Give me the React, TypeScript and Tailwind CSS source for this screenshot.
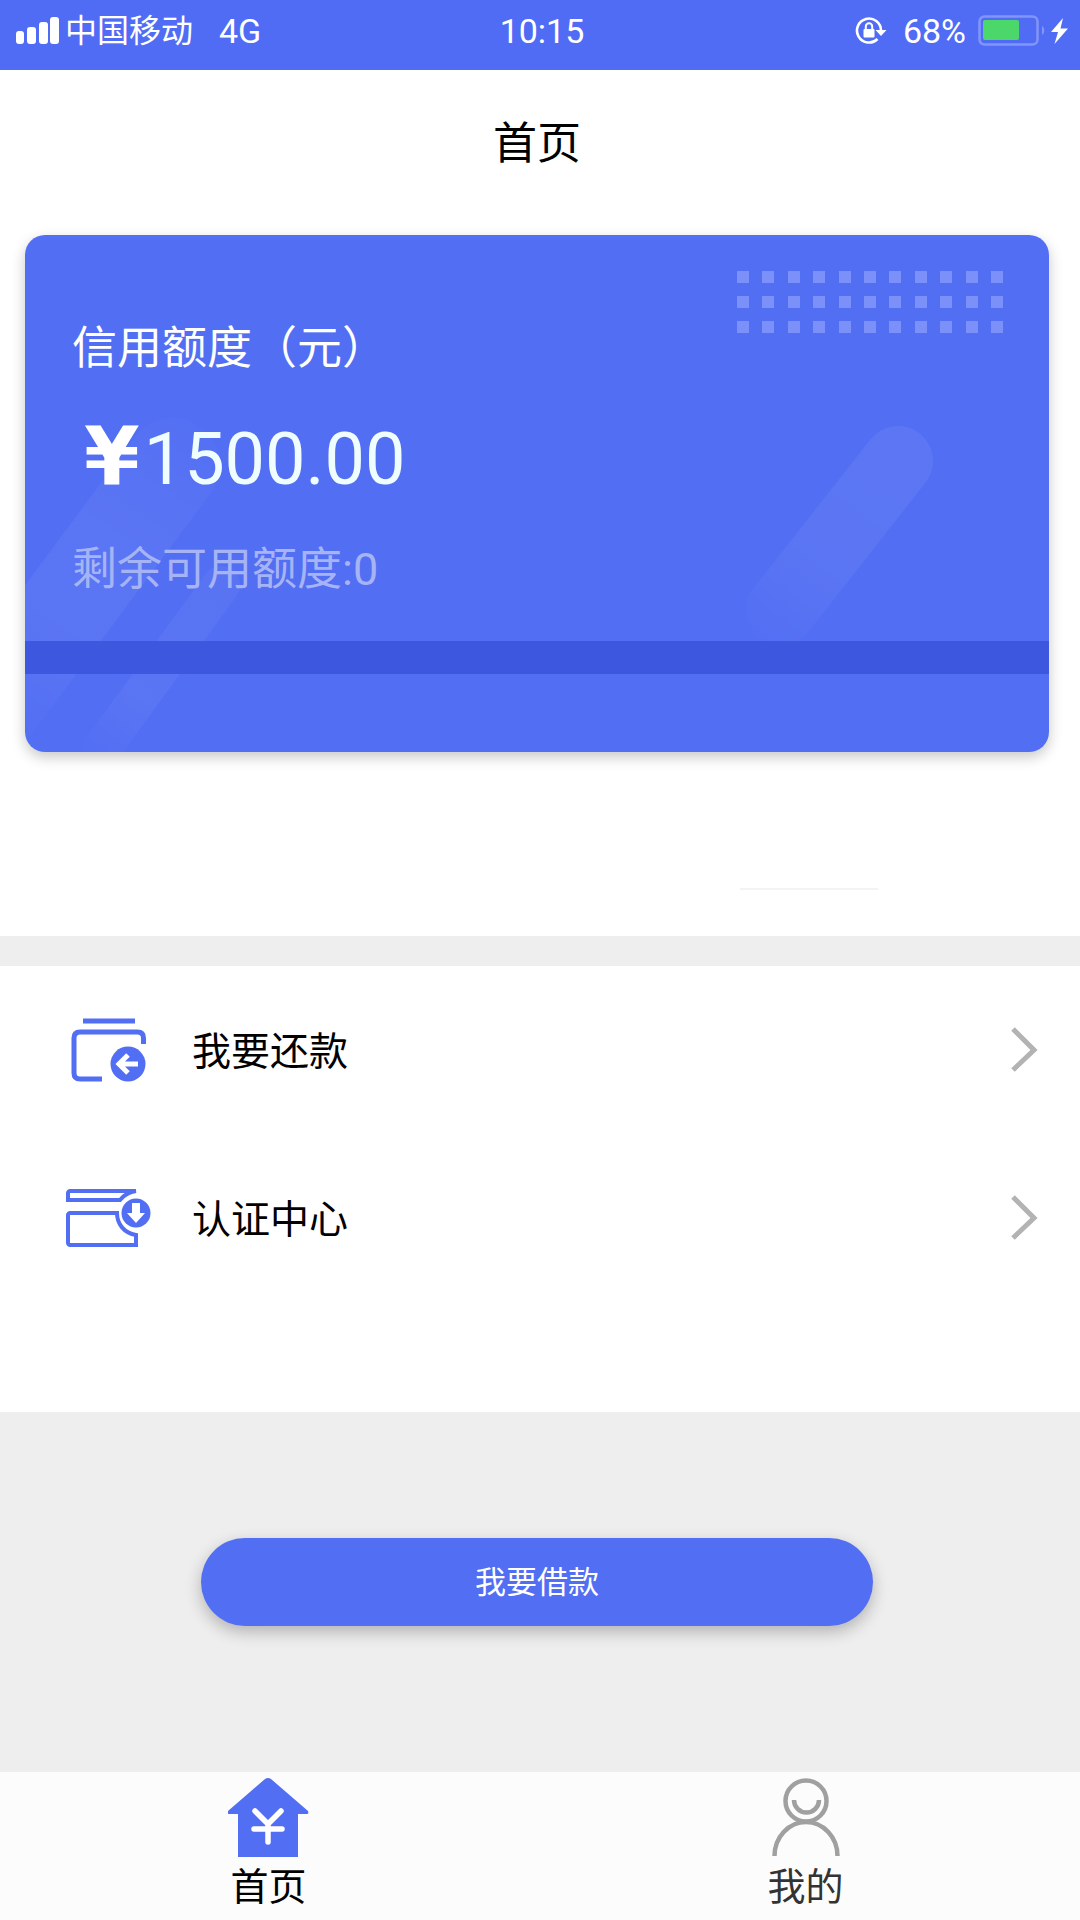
import { useState } from "react";
import type { ReactNode } from "react";

type Tab = "home" | "mine";

const SignalIcon = () => (
  <svg width="43" height="28" viewBox="0 0 43 28" fill="#fff" aria-hidden="true">
    <rect x="0" y="14" width="8" height="13" rx="3" />
    <rect x="11" y="10" width="9" height="17" rx="3" />
    <rect x="23" y="5" width="9" height="22" rx="3" />
    <rect x="34" y="0" width="9" height="27" rx="3" />
  </svg>
);

const RotationLockIcon = () => (
  <svg width="32" height="30" viewBox="0 0 32 30" fill="none" stroke="#fff" strokeWidth="2.6" aria-hidden="true">
    <path d="M26 14.5A12 12 0 1 0 22.5 23" />
    <path d="M20.5 14h11l-5.500 6z" fill="#fff" stroke="none" />
    <rect x="8.500" y="13" width="11" height="8.500" rx="1" fill="#fff" stroke="none" />
    <path d="M10.800 13v-2.500a3.200 3.200 0 0 1 6.400 0V13" strokeWidth="2" />
  </svg>
);

const BatteryIcon = () => (
  <svg width="69" height="32" viewBox="0 0 69 32" fill="none" aria-hidden="true">
    <rect x="1.500" y="1.500" width="58" height="28" rx="5" stroke="#8295fa" strokeWidth="2.500" />
    <rect x="5" y="5" width="36" height="20" rx="2" fill="#4cd76a" />
    <path d="M64 11c3 1 3 8 0 9z" fill="#8295fa" />
  </svg>
);

const BoltIcon = () => (
  <svg width="17" height="26" viewBox="0 0 17 26" fill="#fff" aria-hidden="true">
    <path d="M12 0 0 14h7L3.500 26 17 10.500H9.500z" />
  </svg>
);

const RepayIcon = () => (
  <svg width="86" height="68" viewBox="0 0 86 68" fill="none" stroke="#526ef3" strokeWidth="5" aria-hidden="true">
    <path d="M18 5h52" />
    <path d="M78.500 28v-6c0-4-2-6-6-6H15c-4 0-6 2-6 6v35c0 4 2 6 6 6h22" />
    <circle cx="63" cy="48" r="17.500" fill="#526ef3" stroke="none" />
    <path d="M73 48H55M63 39l-9 9 9 9" stroke="#fff" />
  </svg>
);

const CertIcon = () => (
  <svg width="86" height="68" viewBox="0 0 86 68" fill="none" stroke="#526ef3" strokeWidth="4" aria-hidden="true">
    <path d="M71 7H5c-1 0-2 1-2 2v7h52c4-5 8-8 16-9z" />
    <path d="M52 29H5c-1 0-2 1-2 2v28c0 1 1 2 2 2h66V51c-12-2-19-11-19-22z" />
    <circle cx="71" cy="29" r="14.500" fill="#526ef3" stroke="none" />
    <path d="M67 19h8v10h5l-9 10-9-10h5z" fill="#fff" stroke="none" />
  </svg>
);

const ChevronIcon = () => (
  <svg width="28" height="46" viewBox="0 0 28 46" fill="none" stroke="#b3b3b3" strokeWidth="5" aria-hidden="true">
    <path d="M3 2l21 21L3 43" />
  </svg>
);

const HomeIcon = () => (
  <svg width="82" height="80" viewBox="0 0 82 80" aria-hidden="true">
    <path d="M37 1q3-2 6 0l37 32q1 3-1 3h-9v43H10V36H1q-2 0-1-3z" fill="#526ef3" />
    <path d="M27 33l13 13 13-13M40 46v18M26 51h28" stroke="#fff" strokeWidth="5.500" strokeLinecap="round" strokeLinejoin="round" fill="none" />
  </svg>
);

const MineIcon = () => (
  <svg width="82" height="80" viewBox="0 0 82 80" fill="none" stroke="#a0a0a0" strokeWidth="4.500" aria-hidden="true">
    <circle cx="41" cy="23" r="20.500" />
    <path d="M29 22a12.500 12.500 0 0 0 25 0" />
    <path d="M9.500 78a31.500 34 0 0 1 63 0" />
  </svg>
);

function StatusBar() {
  return (
    <header className="grid grid-cols-[1fr_auto_1fr] items-center h-[70px] pl-4 pr-3 pb-2 bg-[#506cf5] text-white text-[32px] leading-10">
      <div className="flex items-center gap-1.5">
        <SignalIcon />
        <span>中国移动</span>
        <span className="ml-5 text-[34px]">4G</span>
      </div>
      <span className="text-[34px]">10:15</span>
      <div className="flex items-center justify-end">
        <RotationLockIcon />
        <span className="ml-4 mr-3 text-[34px]">68%</span>
        <BatteryIcon />
        <span className="ml-1">
          <BoltIcon />
        </span>
      </div>
    </header>
  );
}

function CardDecoration() {
  return (
    <>
      <svg className="absolute left-0 top-0" width="300" height="518" viewBox="0 0 300 518" fill="none" strokeLinecap="round" aria-hidden="true">
        <defs>
          <linearGradient id="fadeL" gradientUnits="userSpaceOnUse" x1="170" y1="180" x2="-20" y2="480">
            <stop offset="0" stopColor="#fff" stopOpacity="0.01" />
            <stop offset="0.4" stopColor="#fff" stopOpacity="0.05" />
            <stop offset="0.7" stopColor="#fff" stopOpacity="0.05" />
            <stop offset="1" stopColor="#fff" stopOpacity="0.01" />
          </linearGradient>
          <linearGradient id="fadeS" gradientUnits="userSpaceOnUse" x1="203" y1="350" x2="80" y2="515">
            <stop offset="0" stopColor="#fff" stopOpacity="0.04" />
            <stop offset="0.7" stopColor="#fff" stopOpacity="0.05" />
            <stop offset="1" stopColor="#fff" stopOpacity="0.01" />
          </linearGradient>
        </defs>
        <path d="M148 230-40 483" stroke="url(#fadeL)" strokeWidth="94" />
        <path d="M196 350 76 515" stroke="url(#fadeS)" strokeWidth="38" />
      </svg>
      <svg className="absolute right-0 top-0" width="324" height="406" viewBox="700 0 324 406" fill="none" strokeLinecap="round" aria-hidden="true">
        <defs>
          <linearGradient id="fadeR" gradientUnits="userSpaceOnUse" x1="873" y1="221" x2="740" y2="400">
            <stop offset="0" stopColor="#fff" stopOpacity="0.06" />
            <stop offset="0.6" stopColor="#fff" stopOpacity="0.05" />
            <stop offset="1" stopColor="#fff" stopOpacity="0.01" />
          </linearGradient>
        </defs>
        <path d="M873 226 756 375" stroke="url(#fadeR)" strokeWidth="70" />
      </svg>
      <div className="absolute right-[46px] top-9 w-[266px] grid grid-cols-[repeat(11,12px)] justify-between gap-y-[13px]">
        {Array.from({ length: 33 }, (_, i) => (
          <i key={i} className="block size-3 bg-[#7b91f9]" />
        ))}
      </div>
    </>
  );
}

function CreditCard() {
  return (
    <section className="relative overflow-hidden rounded-[20px] bg-[#526ef3] text-white">
      <CardDecoration />
      <div className="relative pl-[47px] pt-[84px] pb-[41px]">
        <h2 className="text-[45px] leading-[60px]">信用额度（元）</h2>
        <p className="flex items-baseline gap-1 pl-3 mt-9 text-[72px] leading-[84px] text-[#effdff]">
          <span className="font-['DejaVu_Sans',sans-serif] font-bold text-[80px] text-white">¥</span>
          <span>1500.00</span>
        </p>
        <p className="mt-[38px] text-[45px] leading-[60px] text-[#a6b4f5]">剩余可用额度:0</p>
      </div>
      <div className="relative h-[33px] bg-[#3d58df]" />
      <div className="h-[78px]" />
    </section>
  );
}

function MenuRow({ icon, label }: { icon: ReactNode; label: string }) {
  return (
    <li>
      <button type="button" className="flex items-center w-full h-[168px] pl-[65px] pr-[42px] text-left">
        {icon}
        <span className="flex-1 ml-[41px] pt-1 text-[39px] leading-[52px] text-black">{label}</span>
        <ChevronIcon />
      </button>
    </li>
  );
}

export default function App() {
  const [tab, setTab] = useState<Tab>("home");

  const tabs: { id: Tab; label: string; icon: ReactNode }[] = [
    { id: "home", label: "首页", icon: <HomeIcon /> },
    { id: "mine", label: "我的", icon: <MineIcon /> },
  ];

  return (
    <div className="flex flex-col min-h-screen bg-[#eee] font-['Roboto','Noto_Sans_CJK_SC',sans-serif]">
      <StatusBar />

      <main className="flex-1 flex flex-col">
        <div className="bg-white pl-[25px] pr-[31px]">
          <h1 className="pt-11 pb-[60px] text-center text-[44px] leading-[61px] text-black">首页</h1>
          <div className="rounded-[20px] shadow-[0_5px_14px_rgba(0,0,0,0.22)]">
            <CreditCard />
          </div>
          <div className="flex justify-end h-[184px] pt-[136px] pr-[171px]">
            <div className="w-[138px] h-0.5 bg-[#f3f3f3]" />
          </div>
        </div>

        <ul className="mt-[30px] pb-[110px] bg-white">
          <MenuRow icon={<RepayIcon />} label="我要还款" />
          <MenuRow icon={<CertIcon />} label="认证中心" />
        </ul>

        <div className="flex-1 flex justify-center items-start pt-[126px] pb-20 pr-1.5">
          <button
            type="button"
            className="w-[672px] h-[88px] pt-0.5 rounded-full bg-[#526ef3] text-white text-[31px] leading-10 shadow-[0_6px_16px_rgba(0,0,0,0.25)]"
          >
            我要借款
          </button>
        </div>
      </main>

      <nav className="grid grid-cols-2 h-[148px] pr-1.5 bg-[#fcfcfc]">
        {tabs.map((t) => (
          <button
            key={t.id}
            type="button"
            aria-current={tab === t.id ? "page" : undefined}
            onClick={() => setTab(t.id)}
            className={`flex flex-col items-center pt-1.5 text-[38px] leading-[58px] ${
              tab === t.id ? "text-black" : "text-[#333]"
            }`}
          >
            {t.icon}
            <span>{t.label}</span>
          </button>
        ))}
      </nav>
    </div>
  );
}
